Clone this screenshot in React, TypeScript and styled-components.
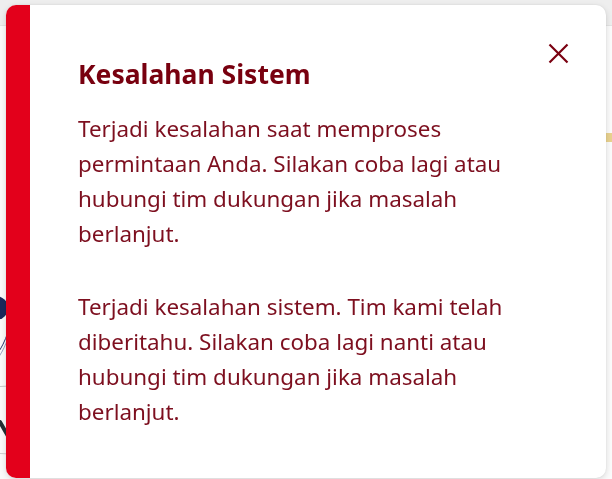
import React from 'react';
import styled, { createGlobalStyle } from 'styled-components';

const colors = {
  accent: '#e3001b',
  title: '#78000f',
  text: '#7d0f1f',
  close: '#7a0010',
  pageBg: '#fbfbfb',
  headerBg: '#eeeeee',
};

const GlobalStyle = createGlobalStyle`
  html, body {
    margin: 0;
    padding: 0;
    height: 100%;
    overflow: hidden;
  }
  body {
    font-family: "Noto Sans", "Open Sans", "Liberation Sans", sans-serif;
    background: ${colors.pageBg};
  }
`;

// page behind the dialog
const Page = styled.div`
  width: 612px;
  height: 479px;
  display: flex;
  flex-direction: column;
  background: ${colors.pageBg};
`;

const PageHeader = styled.div`
  height: 25px;
  background: ${colors.headerBg};
  border-bottom: 1px solid #e3e3e3;
`;

const PageBody = styled.div`
  flex: 1;
  display: flex;
  justify-content: space-between;
  align-items: flex-start;
`;

const Illustration = styled.svg`
  margin-top: 262px;
  margin-left: -30px;
`;

const Highlight = styled.div`
  margin-top: 107px;
  width: 8px;
  height: 9px;
  background: #e9d28f;
`;

// dialog
const Dialog = styled.div`
  position: fixed;
  left: 6px;
  top: 5px;
  width: 600px;
  height: 473px;
  display: flex;
  background: #ffffff;
  border-radius: 10px;
  overflow: hidden;
  box-shadow: 0 2px 6px rgba(0, 0, 0, 0.14), 0 0 2px rgba(0, 0, 0, 0.08);
`;

const AccentBar = styled.div`
  width: 24px;
  flex-shrink: 0;
  background: ${colors.accent};
`;

const Content = styled.div`
  position: relative;
  flex: 1;
  padding: 52px 40px 0 48px;
`;

const Title = styled.h2`
  margin: 0 0 20px;
  font-size: 26.5px;
  line-height: 34px;
  font-weight: 700;
  color: ${colors.title};
`;

const Message = styled.p<{ $last?: boolean }>`
  max-width: 445px;
  margin: 0 0 ${({ $last }) => ($last ? '0' : '38px')};
  font-size: 22.4px;
  line-height: 35px;
  color: ${colors.text};
`;

const CloseButton = styled.button`
  position: absolute;
  top: 38px;
  right: 37px;
  width: 21px;
  height: 21px;
  padding: 0;
  border: none;
  background: none;
  cursor: pointer;
  display: flex;
  align-items: center;
  justify-content: center;
  color: ${colors.close};
`;

const App: React.FC = () => {
  return (
    <>
      <GlobalStyle />
      <Page>
        <PageHeader />
        <PageBody>
          <Illustration width="40" height="180" viewBox="0 0 40 180">
            <circle cx="26" cy="20" r="12" fill="#1d2a5c" />
            <path d="M38 44 C 32 62, 24 72, 12 80" stroke="#2a3870" strokeWidth="1" fill="none" />
            <path d="M38 50 C 33 64, 27 74, 16 82" stroke="#9aa3c0" strokeWidth="1" fill="none" />
            <path d="M0 100 L 40 98" stroke="#c8c8c8" strokeWidth="1" />
            <path d="M30 134 L 38 148" stroke="#233033" strokeWidth="4" strokeLinecap="round" />
            <path d="M0 164 L 40 166" stroke="#cfcfcf" strokeWidth="1" />
          </Illustration>
          <Highlight />
        </PageBody>
      </Page>

      <Dialog role="alertdialog">
        <AccentBar />
        <Content>
          <CloseButton aria-label="Tutup">
            <svg width="21" height="21" viewBox="0 0 21 21" fill="none">
              <path d="M1.5 1.5 L19.5 19.5 M19.5 1.5 L1.5 19.5" stroke="currentColor" strokeWidth="2.2" />
            </svg>
          </CloseButton>
          <Title>Kesalahan Sistem</Title>
          <Message>
            Terjadi kesalahan saat memproses permintaan Anda. Silakan coba lagi atau hubungi tim
            dukungan jika masalah berlanjut.
          </Message>
          <Message $last>
            Terjadi kesalahan sistem. Tim kami telah diberitahu. Silakan coba lagi nanti atau
            hubungi tim dukungan jika masalah berlanjut.
          </Message>
        </Content>
      </Dialog>
    </>
  );
};

export default App;
